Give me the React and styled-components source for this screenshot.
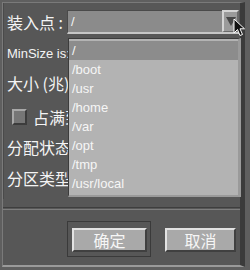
import styled, { createGlobalStyle } from "styled-components";

const GlobalStyle = createGlobalStyle`
  html, body {
    margin: 0;
    padding: 0;
    background: #606060;
  }
  * {
    box-sizing: border-box;
  }
`;

const Screen = styled.div`
  position: relative;
  width: 250px;
  height: 270px;
  overflow: hidden;
  background: #5f5f5f;
  padding: 2px 0 0 2px;
  font-family: "Liberation Sans", "Noto Sans CJK SC", sans-serif;
  color: #f2f2f2;
`;

const Window = styled.div`
  position: relative;
  width: 243px;
  height: 265px;
  background: #575757;
  border-top: 1px solid #7a7a7a;
  border-left: 1px solid #7a7a7a;
  border-right: 5px solid #3b3b3b;
  border-bottom: 2px solid #9a9a9a;
  display: flex;
  flex-direction: column;
`;

const Form = styled.div`
  padding: 4px 0 0 4px;
  box-shadow: inset 1px 0 0 #4a4a4a;
  display: flex;
  flex-direction: column;
`;

/* rows under the open list are cut where the list begins */
const Row = styled.div`
  height: ${(p) => p.$h}px;
  width: ${(p) => (p.$clip ? "61px" : "auto")};
  overflow: ${(p) => (p.$clip ? "hidden" : "visible")};
  display: flex;
  align-items: center;
  gap: 6px;
  white-space: nowrap;
`;

const Label = styled.span`
  font-family: "Noto Sans CJK SC", sans-serif;
  font-size: 16px;
  line-height: 1;
  color: #f4f4f4;
`;

const SmallLabel = styled.span`
  font-family: "Liberation Sans", sans-serif;
  font-size: 13px;
  color: #f4f4f4;
`;

const Combo = styled.div`
  margin-left: -2px;
  width: 172px;
  height: 24px;
  display: flex;
  background: #8b8b8b;
  border-top: 1px solid #4a4a4a;
  border-left: 1px solid #4a4a4a;
  border-bottom: 2px solid #c6c6c6;
`;

const ComboText = styled.div`
  flex: 1;
  padding-left: 3px;
  font-size: 13px;
  line-height: 21px;
  color: #f4f4f4;
`;

const ArrowButton = styled.div`
  width: 17px;
  height: 22px;
  margin-top: -1px;
  background: #9a9a9a;
  border-top: 2px solid #d4d4d4;
  border-left: 2px solid #d4d4d4;
  border-right: 2px solid #6a6a6a;
  border-bottom: 1px solid #6a6a6a;
  display: flex;
  align-items: center;
  justify-content: center;
`;

const Check = styled.span`
  flex: none;
  width: 15px;
  height: 16px;
  margin-left: 5px;
  background: #767676;
  border-top: 2px solid #a8a8a8;
  border-left: 2px solid #a8a8a8;
  border-right: 2px solid #3c3c3c;
  border-bottom: 2px solid #3c3c3c;
`;

const Separator = styled.div`
  margin-top: 8px;
  height: 3px;
  border-top: 1px solid #3e3e3e;
  border-bottom: 1px solid #7e7e7e;
`;

const ButtonBar = styled.div`
  flex: 1;
  display: flex;
  align-items: flex-start;
  padding: 11px 0 0 64px;
  gap: 9px;
`;

const ButtonFrame = styled.div`
  padding: 6px 3px 4px 4px;
  border: 1px solid ${(p) => (p.$default ? "#3a3a3a" : "transparent")};
`;

const Button = styled.button`
  width: ${(p) => p.$w}px;
  height: 24px;
  padding: 0;
  background: #a9a9a9;
  border-top: 2px solid #e2e2e2;
  border-left: 2px solid #e2e2e2;
  border-right: 2px solid #404040;
  border-bottom: 2px solid #404040;
  font-family: "Noto Sans CJK SC", sans-serif;
  font-size: 16px;
  line-height: 1;
  color: #f6f6f6;
`;

const DropList = styled.ul`
  position: absolute;
  left: 65px;
  top: 35px;
  width: 173px;
  margin: 0;
  padding: 2px 0 2px 0;
  list-style: none;
  background: #b3b3b3;
  border-top: 1px solid #3c3c3c;
  border-left: 1px solid #3c3c3c;
  border-right: 3px solid #9a9a9a;
  border-bottom: 2px solid #9a9a9a;
`;

const Item = styled.li`
  height: 19px;
  line-height: 19px;
  padding-left: 3px;
  font-size: 13px;
  color: #f6f6f6;
  background: ${(p) => (p.$active ? "#8c8c8c" : "transparent")};
`;

const Cursor = styled.svg`
  position: absolute;
  left: 233px;
  top: 18px;
`;

const mounts = ["/", "/boot", "/usr", "/home", "/var", "/opt", "/tmp", "/usr/local"];

export default function App() {
  return (
    <>
      <GlobalStyle />
      <Screen>
        <Window>
          <Form>
            <Row $h={30}>
              <Label>装入点 :</Label>
              <Combo>
                <ComboText>/</ComboText>
                <ArrowButton>
                  <svg width="10" height="9" viewBox="0 0 10 9">
                    <polygon points="0,0 10,0 5,9" fill="#474747" />
                  </svg>
                </ArrowButton>
              </Combo>
            </Row>
            <Row $h={32} $clip>
              <SmallLabel>MinSize is:</SmallLabel>
            </Row>
            <Row $h={28} $clip>
              <Label>大小 (兆)</Label>
            </Row>
            <Row $h={40} $clip>
              <Check />
              <Label>占满到</Label>
            </Row>
            <Row $h={20} $clip>
              <Label>分配状态</Label>
            </Row>
            <Row $h={42} $clip>
              <Label>分区类型</Label>
            </Row>
          </Form>
          <Separator />
          <ButtonBar>
            <ButtonFrame $default>
              <Button $w={75}>确定</Button>
            </ButtonFrame>
            <ButtonFrame>
              <Button $w={71}>取消</Button>
            </ButtonFrame>
          </ButtonBar>
          <DropList>
            {mounts.map((m, i) => (
              <Item key={m} $active={i === 0}>
                {m}
              </Item>
            ))}
          </DropList>
        </Window>
        <Cursor width="13" height="19" viewBox="0 0 13 19">
          <path
            d="M1 1 L1 15 L4.5 11.5 L7 17.5 L9.5 16.5 L7 10.8 L11.5 10.8 Z"
            fill="#111"
            stroke="#fff"
            strokeWidth="1"
          />
        </Cursor>
      </Screen>
    </>
  );
}
